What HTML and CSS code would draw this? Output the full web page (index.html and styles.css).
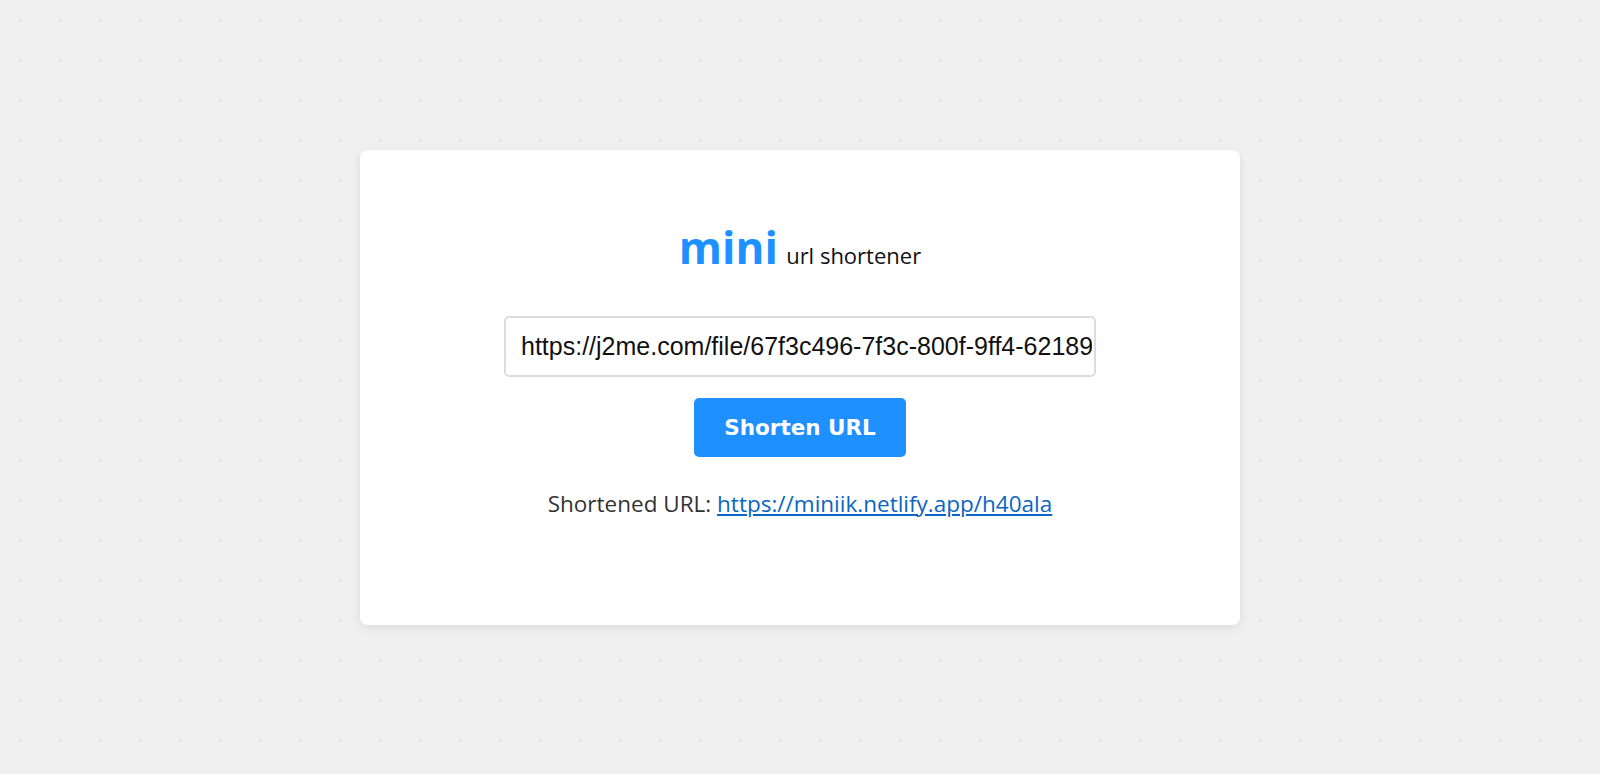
FILE: index.html
```html
<!DOCTYPE html>
<html lang="en">
<head>
<meta charset="utf-8">
<title>mini url shortener</title>
<link rel="stylesheet" href="styles.css">
</head>
<body>
<main class="card">
  <h1 class="title"><span class="brand">mini</span> <span class="tagline">url shortener</span></h1>
  <input class="url-input" type="text" value="https://j2me.com/file/67f3c496-7f3c-800f-9ff4-62189a1b2c3d">
  <button class="shorten-btn" type="button">Shorten URL</button>
  <p class="result">Shortened URL: <a class="result-link" href="#">https://miniik.netlify.app/h40ala</a></p>
</main>
</body>
</html>
```
FILE: styles.css
```css
html, body {
  margin: 0;
  padding: 0;
}
body {
  height: 100vh;
  display: flex;
  align-items: center;
  justify-content: center;
  background-color: #f0f0f0;
  background-image: radial-gradient(circle at 20.5px 20.5px, #cfcfcf 0.8px, transparent 1.2px);
  background-size: 40px 40px;
  font-family: "Open Sans", "Noto Sans", sans-serif;
}
.card {
  box-sizing: border-box;
  width: 880px;
  height: 475px;
  background: #fff;
  border-radius: 8px;
  box-shadow: 0 3px 10px rgba(0, 0, 0, 0.09);
  padding-top: 71px;
  display: flex;
  flex-direction: column;
  align-items: center;
}
.title {
  margin: 0;
  line-height: 52px;
  font-weight: 400;
  white-space: nowrap;
}
.brand {
  font-size: 44px;
  font-weight: 700;
  color: #1e90ff;
}
.tagline {
  font-size: 22px;
  color: #111;
}
.url-input {
  box-sizing: border-box;
  margin-top: 35px;
  width: 592px;
  height: 61px;
  padding: 0 2px 0 15px;
  border: 2px solid #dcdcdc;
  border-radius: 5px;
  font-family: "Liberation Sans", Arial, sans-serif;
  font-size: 25px;
  color: #111;
  outline: none;
}
.shorten-btn {
  margin-top: 21px;
  height: 59px;
  padding: 0 30px;
  border: none;
  border-radius: 5px;
  background: #1e90ff;
  color: #fff;
  font-family: "DejaVu Sans", sans-serif;
  font-weight: 700;
  font-size: 21.5px;
  cursor: pointer;
}
.result {
  margin: 32px 0 0;
  line-height: 30px;
  font-size: 22.5px;
  color: #333;
}
.result-link {
  color: #0b66c3;
  text-decoration: underline;
}
```
